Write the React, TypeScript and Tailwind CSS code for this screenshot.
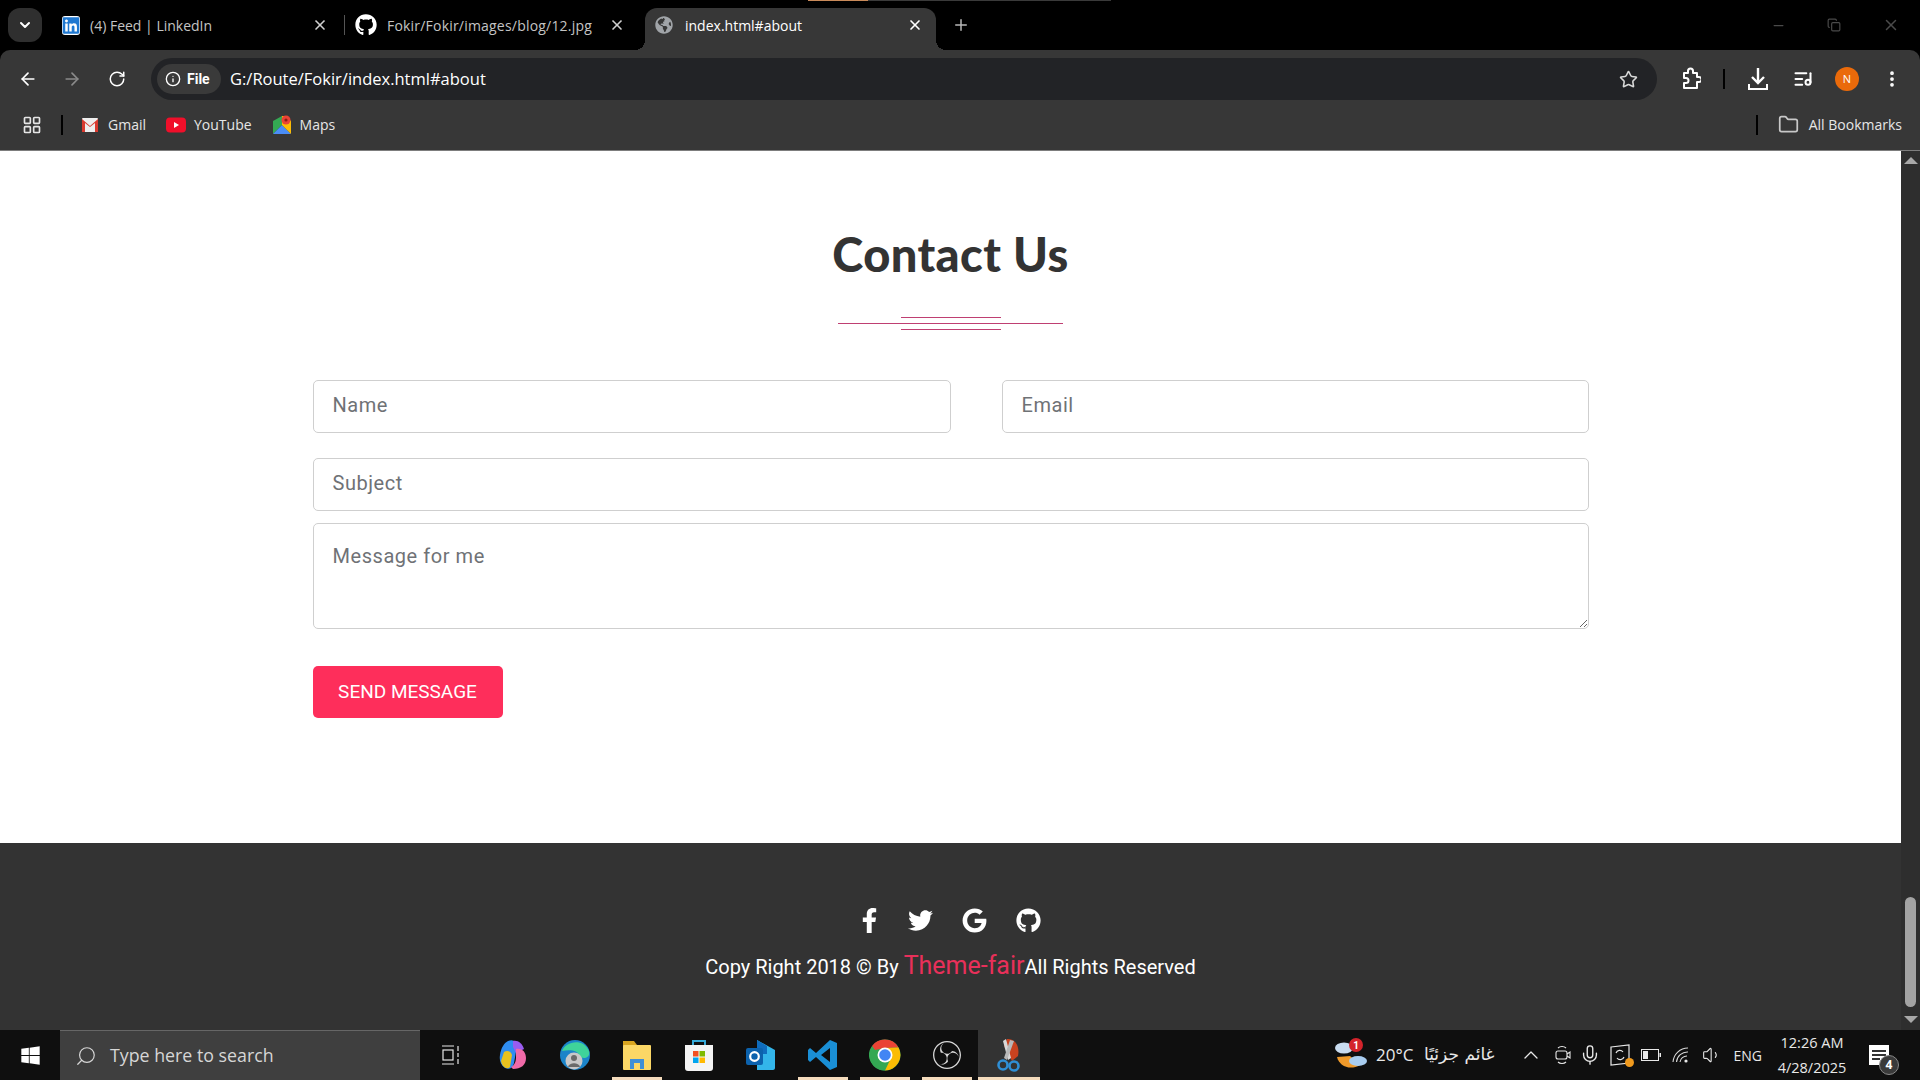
import React from 'react';
import {
  ArrowLeft,
  ArrowRight,
  ChevronDown,
  ChevronUp,
  Copy,
  Folder,
  Info,
  LayoutGrid,
  ListMusic,
  Mic,
  Minus,
  MoreVertical,
  Plus,
  RotateCw,
  Search,
  Star,
  Volume1,
  X,
} from 'lucide-react';
import { FaFacebookF, FaGithub, FaGoogle, FaLinkedin, FaTwitter, FaWindows, FaGlobeAmericas } from 'react-icons/fa';
import { SiObsstudio } from 'react-icons/si';

const GmailIcon = () => (
  <svg viewBox="0 0 18 16" className="w-[18px] h-[16px]">
    <rect x="1" y="1" width="16" height="14" rx="1" fill="#eee" />
    <path d="M1 2 L9 9 L17 2 V15 H14 V6 L9 10 L4 6 V15 H1 Z" fill="#d93a2f" />
  </svg>
);

const YoutubeIcon = () => (
  <svg viewBox="0 0 20 16" className="w-[20px] h-[16px]">
    <rect width="20" height="15" y="0.5" rx="4" fill="#f00f2a" />
    <path d="M8 5 L13 8 L8 11 Z" fill="#fff" />
  </svg>
);

const MapsIcon = () => (
  <svg viewBox="0 0 18 20" className="w-[18px] h-[20px]">
    <path d="M0 6 L9 1 V10 L0 19 Z" fill="#34a853" />
    <path d="M9 10 L18 19 H0 Z" fill="#4a8df6" />
    <path d="M9 1 L13 1 L18 6 V19 L9 10 Z" fill="#fbbc04" />
    <circle cx="13" cy="5" r="4.5" fill="#ea4335" />
    <circle cx="13" cy="5" r="1.6" fill="#8f1d14" />
  </svg>
);

const ExtensionIcon = () => (
  <svg viewBox="0 0 20 24" className="w-[20px] h-[24px]" fill="none" stroke="#fff" strokeWidth="2" strokeLinejoin="round">
    <path d="M3 6 H7 V4 A2.5 2.5 0 0 1 12 4 V6 H16 V10 H18 A2.5 2.5 0 0 1 18 15 H16 V21 H3 V16 H5 A2.5 2.5 0 0 0 5 11 H3 Z" />
  </svg>
);

const TrayDownloadIcon = () => (
  <svg viewBox="0 0 22 24" className="w-[22px] h-[24px]" fill="none" stroke="#fff" strokeWidth="2.4">
    <path d="M11 1 V15 M5 10 L11 16 L17 10" />
    <path d="M2 17 V22 H20 V17" strokeWidth="2" />
  </svg>
);

const CopilotIcon = () => (
  <svg viewBox="0 0 28 32" className="w-[28px] h-[32px]">
    <path d="M9 2 C14 0 17 2 18 7 L15 24 C14 29 10 31 6 29 C2 26 0 22 1 16 C2 9 5 4 9 2 Z" fill="#2f8df0" />
    <path d="M5 13 C8 11 12 12 13 16 L11 28 C8 31 3 28 2 22 Z" fill="#e8c21f" />
    <path d="M14 2 C19 1 23 4 25 10 L17 14 L14 8 Z" fill="#9a5cf0" />
    <path d="M17 10 C23 9 27 13 27 19 C27 26 22 30 14 30 L12 28 C16 26 17 22 17 18 Z" fill="#f06aa8" />
  </svg>
);

const EdgeIcon = () => (
  <svg viewBox="0 0 32 32" className="w-[32px] h-[32px]">
    <circle cx="16" cy="16" r="15" fill="#1b84c9" />
    <path d="M3 12 C6 3 24 -2 30 12 C32 20 22 21 20 16 C19 12 12 10 3 12 Z" fill="#3fd39a" />
    <circle cx="15" cy="22" r="8.5" fill="#c8c8c8" />
    <circle cx="15" cy="19" r="3" fill="#6a6a6a" />
    <path d="M9 28 C10 23 20 23 21 28 Z" fill="#6a6a6a" />
  </svg>
);

const ExplorerIcon = () => (
  <svg viewBox="0 0 30 30" className="w-[30px] h-[30px]">
    <path d="M1 1 H12 L15 5 V10 H1 Z" fill="#d9a520" />
    <rect x="1" y="5" width="28" height="25" rx="1" fill="#fbd766" />
    <path d="M8 29 V19 H22 V29 H18 V23 H12 V29 Z" fill="#3f8fd6" />
  </svg>
);

const StoreIcon = () => (
  <svg viewBox="0 0 30 34" className="w-[30px] h-[34px]">
    <path d="M9 8 V3 H21 V8" stroke="#35a9d8" strokeWidth="2" fill="none" />
    <path d="M1 7 H29 V30 C29 32 28 33 26 33 H4 C2 33 1 32 1 30 Z" fill="#f4f4f4" />
    <rect x="9" y="13" width="5.5" height="5.5" fill="#f25022" />
    <rect x="15.5" y="13" width="5.5" height="5.5" fill="#7fba00" />
    <rect x="9" y="19.5" width="5.5" height="5.5" fill="#00a4ef" />
    <rect x="15.5" y="19.5" width="5.5" height="5.5" fill="#ffb900" />
  </svg>
);

const OutlookIcon = () => (
  <svg viewBox="0 0 32 32" className="w-[32px] h-[32px]">
    <path d="M12 1 L30 11 V29 C30 30 29 31 28 31 H12 Z" fill="#33b5ea" />
    <path d="M12 1 L22 7 V15 H12 Z" fill="#0f6cbd" />
    <rect x="1" y="9" width="17" height="17" rx="2" fill="#0c62ad" />
    <circle cx="9.5" cy="17.5" r="4.3" fill="none" stroke="#fff" strokeWidth="2.2" />
  </svg>
);

const VscodeIcon = () => (
  <svg viewBox="0 0 32 32" className="w-[32px] h-[32px]">
    <path d="M23 1 L30 4 V28 L23 31 L9 18 L3 23 L1 21 V11 L3 9 L9 14 Z M23 9 L14 16 L23 23 Z" fill="#1a8fd6" />
  </svg>
);

const ChromeIcon = () => (
  <svg viewBox="0 0 32 32" className="w-[32px] h-[32px]">
    <circle cx="16" cy="16" r="15.5" fill="#34a853" />
    <path d="M16 .5 A15.5 15.5 0 0 1 29.5 8.5 L16 9 L6 11 L3 7 A15.5 15.5 0 0 1 16 .5 Z" fill="#ea4335" />
    <path d="M3 7 A15.5 15.5 0 0 0 16 31.5 L22 20 L10 20 Z" fill="#34a853" />
    <path d="M29.5 8.5 A15.5 15.5 0 0 1 16 31.5 L22 19 L16 9 Z" fill="#fbbc04" />
    <circle cx="16" cy="16" r="7.5" fill="#fff" />
    <circle cx="16" cy="16" r="5.8" fill="#4285f4" />
  </svg>
);

const SnipIcon = () => (
  <svg viewBox="0 0 30 34" className="w-[30px] h-[34px]">
    <path d="M13 1 C21 0 26 8 24 18 L18 23 L10 8 Z" fill="#c8421f" />
    <path d="M12 1 L17 20 L14 22 L9 3 Z" fill="#d8d8d8" />
    <path d="M20 3 L13 22 L10 20 L16 2 Z" fill="#b8b8b8" />
    <circle cx="9" cy="27" r="4.5" fill="none" stroke="#2f8fd6" strokeWidth="2.6" />
    <circle cx="20" cy="28" r="4.5" fill="none" stroke="#2f8fd6" strokeWidth="2.6" />
  </svg>
);

const WeatherIcon = () => (
  <svg viewBox="0 0 34 34" className="w-[34px] h-[34px]">
    <ellipse cx="10" cy="10" rx="9" ry="5.5" fill="#c9dcf0" />
    <path d="M3 19 C5 28 16 33 26 27 L16 18 Z" fill="#f09a2a" />
    <ellipse cx="24" cy="23" rx="9" ry="5" fill="#a9cdf0" />
    <circle cx="22" cy="7" r="7" fill="#d4232b" />
    <text x="22" y="11" textAnchor="middle" fontSize="10" fontWeight="700" fill="#fff" fontFamily="Roboto, sans-serif">1</text>
  </svg>
);

const MeetIcon = () => (
  <svg viewBox="0 0 16 20" className="w-[16px] h-[20px]" fill="none" stroke="#e8e8e8" strokeWidth="1.1">
    <path d="M3 3 C5 1 9 1 11 3 M3 17 C5 19 9 19 11 17" />
    <rect x="1" y="6" width="11" height="8" rx="2" />
    <path d="M12 9 L15 7 V13 L12 11" />
  </svg>
);

const BatteryIcon = () => (
  <svg viewBox="0 0 20 12" className="w-[20px] h-[12px]">
    <rect x="0.5" y="0.5" width="17" height="11" fill="none" stroke="#e8e8e8" />
    <rect x="2" y="2" width="5" height="8" fill="#e8e8e8" />
    <rect x="18.5" y="4" width="1.5" height="4" fill="#e8e8e8" />
  </svg>
);

const WifiIcon = () => (
  <svg viewBox="0 0 18 18" className="w-[18px] h-[18px]" fill="none" stroke="#d8d8d8" strokeWidth="1.1">
    <path d="M1 16 A15 15 0 0 1 16 2" />
    <path d="M4.5 16 A11 11 0 0 1 16 6" />
    <path d="M8 16 A7 7 0 0 1 15 10" />
    <circle cx="14" cy="15" r="1.6" fill="#e8e8e8" stroke="none" />
  </svg>
);

const UpdateIcon = () => (
  <div className="relative w-[20px] h-[22px]">
    <svg viewBox="0 0 20 22" className="w-[20px] h-[22px]">
      <path d="M1 3 L19 1 V19 L1 21 Z" fill="none" stroke="#e8e8e8" strokeWidth="1.2" />
      <path d="M6 9 A4 4 0 0 1 13 8 M14 13 A4 4 0 0 1 7 14" fill="none" stroke="#e8e8e8" strokeWidth="1.2" />
    </svg>
    <div className="absolute right-[-4px] bottom-[-1px] w-[9px] h-[9px] rounded-full bg-[#f09a1e]" />
  </div>
);

const TaskbarApp = ({ children, open, active }: { children: React.ReactNode; open?: boolean; active?: boolean }) => (
  <div className={`relative w-[62px] h-[50px] flex items-center justify-center shrink-0 ${active ? 'bg-[#333333]' : ''}`}>
    {children}
    {open && <div className={`absolute bottom-0 h-[3px] bg-[#f5dcbd] ${active ? 'left-0 right-0' : 'left-[6px] right-[6px]'}`} />}
  </div>
);

const inputClass =
  "w-full border border-[#cfcfcf] rounded-[5px] bg-white px-[19px] text-[20px] tracking-[0.55px] text-[#495057] placeholder:text-[#6f7276] outline-none";

export default function App() {
  return (
    <div className="relative w-[1920px] h-[1080px] overflow-hidden flex flex-col bg-black font-['Roboto',sans-serif]">
      {/* tab strip */}
      <div className="h-[50px] shrink-0 bg-black flex font-['Open_Sans',sans-serif] text-[14px]">
        <div className="ml-[8px] mt-[8px] w-[34px] h-[34px] rounded-[12px] bg-[#2f2f2f] flex items-center justify-center text-white">
          <ChevronDown size={16} strokeWidth={3} />
        </div>
        <div className="w-[282px] ml-[20px] h-[50px] flex items-center text-[#c4c4c4]">
          <FaLinkedin size={20} className="text-[#1f78d1] bg-white rounded-[3px] w-[18px] h-[19px]" />
          <span className="ml-[10px]">(4) Feed | LinkedIn</span>
          <X size={16} strokeWidth={2.5} className="ml-auto mr-[16px] text-[#d0d0d0]" />
        </div>
        <div className="mt-[15px] w-px h-[20px] bg-[#555555]" />
        <div className="w-[300px] h-[50px] flex items-center text-[#c4c4c4]">
          <FaGithub size={22} className="ml-[10px] text-white" />
          <span className="ml-[10px] w-[206px] overflow-hidden whitespace-nowrap tracking-[0.2px]">Fokir/Fokir/images/blog/12.jpg</span>
          <X size={16} strokeWidth={2.5} className="ml-auto mr-[20px] text-[#d0d0d0]" />
        </div>
        <div className="relative w-[291px] h-[42px] mt-[8px] pb-[8px] rounded-t-[12px] bg-[#373737] flex items-center text-white">
          <div className="absolute left-[-10px] bottom-0 w-[10px] h-[10px] bg-[radial-gradient(circle_at_0_0,transparent_10px,#373737_10px)]" />
          <div className="absolute right-[-10px] bottom-0 w-[10px] h-[10px] bg-[radial-gradient(circle_at_100%_0,transparent_10px,#373737_10px)]" />
          <FaGlobeAmericas size={18} className="ml-[10px] text-[#a0a4a8]" />
          <span className="ml-[12px]">index.html#about</span>
          <X size={16} strokeWidth={2.5} className="ml-auto mr-[13px]" />
        </div>
        <Plus size={18} className="ml-[16px] mt-[16px] text-[#b8b8b8]" />
        <div className="ml-auto flex h-[50px] items-center text-[#4a4a4a]">
          <Minus size={15} />
          <Copy size={14} className="ml-[41px]" />
          <X size={18} className="ml-[41px] mr-[20px]" />
        </div>
      </div>
      <div className="absolute left-[808px] top-0 h-px w-[60px] bg-[#c98a5a]" />
      <div className="absolute left-[868px] top-0 h-px w-[243px] bg-[#3a3a3a]" />

      {/* toolbar */}
      <div className="h-[50px] shrink-0 bg-[#373737] rounded-t-[10px] flex items-end text-white font-['Open_Sans',sans-serif]">
        <div className="h-[50px] pt-[8px] flex items-center">
          <ArrowLeft size={20} className="ml-[18px]" />
          <ArrowRight size={20} className="ml-[24px] text-[#8a8a8a]" />
          <RotateCw size={18} className="ml-[26px]" />
        </div>
        <div className="ml-[25px] w-[1506px] h-[42px] rounded-full bg-[#222326] flex items-center">
          <div className="ml-[6px] w-[64px] h-[30px] rounded-full bg-[#3a3a3a] flex items-center">
            <Info size={16} className="ml-[8px]" />
            <span className="ml-[6px] text-[14px] font-bold font-['Roboto',sans-serif]">File</span>
          </div>
          <span className="ml-[9px] text-[16.5px]">G:/Route/Fokir/index.html#about</span>
          <Star size={19} className="ml-auto mr-[19px] text-[#d8d8d8]" />
        </div>
        <div className="flex-1 h-[50px] pt-[8px] flex items-center">
          <div className="ml-[24px]"><ExtensionIcon /></div>
          <div className="ml-[22px] w-[2px] h-[20px] bg-black" />
          <div className="ml-[22px]"><TrayDownloadIcon /></div>
          <ListMusic size={20} strokeWidth={2.4} className="ml-[24px]" />
          <div className="ml-[22px] w-[24px] h-[24px] rounded-full bg-[#ea6a0a] flex items-center justify-center text-[11px]">N</div>
          <MoreVertical size={20} strokeWidth={2.5} className="ml-[23px]" />
        </div>
      </div>

      {/* bookmarks */}
      <div className="h-[51px] shrink-0 pb-[1px] bg-[#373737] border-b border-[#7d7d7d] flex items-center text-[14px] text-[#e6e6e6] font-['Open_Sans',sans-serif]">
        <LayoutGrid size={20} className="ml-[22px]" />
        <div className="ml-[19px] w-[2px] h-[20px] bg-black" />
        <div className="ml-[18px]"><GmailIcon /></div>
        <span className="ml-[9px]">Gmail</span>
        <div className="ml-[20px]"><YoutubeIcon /></div>
        <span className="ml-[8px]">YouTube</span>
        <div className="ml-[21px]"><MapsIcon /></div>
        <span className="ml-[9px]">Maps</span>
        <div className="ml-auto w-[2px] h-[20px] bg-black" />
        <Folder size={21} className="ml-[20px] text-[#c8c8c8]" />
        <span className="ml-[10px] mr-[18px]">All Bookmarks</span>
      </div>

      {/* page */}
      <div className="flex-1 flex min-h-0">
        <div className="flex-1 flex flex-col min-w-0">
          <div className="h-[692px] shrink-0 bg-white flex flex-col items-center pt-[73px]">
            <h2 className="text-[47px] leading-[60px] font-black tracking-[0.4px] text-[#333333] font-['Lato',sans-serif]">Contact Us</h2>
            <div className="mt-[33px] flex flex-col items-center gap-[5px]">
              <div className="w-[100px] h-px bg-[#bf3f72]" />
              <div className="w-[225px] h-px bg-[#bf3f72]" />
              <div className="w-[100px] h-px bg-[#bf3f72]" />
            </div>
            <form className="mt-[50px] w-[1276px] flex flex-col">
              <div className="grid grid-cols-[638px_587px] gap-x-[51px]">
                <input placeholder="Name" className={`${inputClass} h-[53px] pb-[3px]`} />
                <input placeholder="Email" className={`${inputClass} h-[53px] pb-[3px]`} />
              </div>
              <input placeholder="Subject" className={`${inputClass} h-[53px] mt-[25px] pb-[4px]`} />
              <textarea placeholder="Message for me" className={`${inputClass} h-[106px] mt-[12px] pt-[17px] block`} />
              <button type="button" className="mt-[37px] w-[190px] h-[52px] rounded-[5px] bg-[#fe2e5b] text-white text-[19px]">
                SEND MESSAGE
              </button>
            </form>
          </div>
          <div className="flex-1 bg-[#333333] flex flex-col items-center text-white">
            <div className="mt-[65px] pr-[4px] flex items-center text-[25px]">
              <FaFacebookF />
              <FaTwitter className="ml-[26px]" />
              <FaGoogle className="ml-[29px]" />
              <FaGithub className="ml-[29px]" />
            </div>
            <p className="mt-[17px] text-[20px] leading-[32px] whitespace-nowrap">
              Copy Right 2018 © By <span className="text-[25px] text-[#e8305a]">Theme-fair</span>All Rights Reserved
            </p>
          </div>
        </div>
        {/* scrollbar */}
        <div className="w-[19px] shrink-0 bg-[#2e2e2e] flex flex-col items-center justify-between text-[#a8a8a8]">
          <div className="mt-[6px] w-0 h-0 border-x-[7px] border-x-transparent border-b-[7px] border-b-[#a8a8a8]" />
          <div className="flex flex-col items-center">
            <div className="w-[11px] h-[110px] rounded-full bg-[#a3a3a3]" />
            <div className="mt-[9px] mb-[7px] w-0 h-0 border-x-[7px] border-x-transparent border-t-[7px] border-t-[#a8a8a8]" />
          </div>
        </div>
      </div>

      {/* taskbar */}
      <div className="h-[50px] shrink-0 bg-[#0f0f0f] flex items-center text-white">
        <div className="w-[60px] flex justify-center">
          <FaWindows size={21} />
        </div>
        <div className="w-[360px] h-[50px] bg-[#3f3f3f] border-t border-[#666666] flex items-center text-[#d6d6d6]">
          <Search size={22} strokeWidth={1.3} className="ml-[15px] -scale-x-100" />
          <span className="ml-[13px] text-[17.8px] font-['Open_Sans',sans-serif]">Type here to search</span>
        </div>
        <TaskbarApp>
          <svg viewBox="0 0 20 20" className="w-[20px] h-[20px]" fill="none" stroke="#e8e8e8" strokeWidth="1.2">
            <path d="M1 1 H13 M1 19 H13 M17 1 V6 M17 8 V12 M17 14 V19" />
            <rect x="2" y="5" width="10" height="10" />
          </svg>
        </TaskbarApp>
        <TaskbarApp><CopilotIcon /></TaskbarApp>
        <TaskbarApp><EdgeIcon /></TaskbarApp>
        <TaskbarApp open><ExplorerIcon /></TaskbarApp>
        <TaskbarApp><StoreIcon /></TaskbarApp>
        <TaskbarApp><OutlookIcon /></TaskbarApp>
        <TaskbarApp open><VscodeIcon /></TaskbarApp>
        <TaskbarApp open><ChromeIcon /></TaskbarApp>
        <TaskbarApp open><SiObsstudio size={28} className="text-[#d8d8d8]" /></TaskbarApp>
        <TaskbarApp open active><SnipIcon /></TaskbarApp>

        <div className="ml-auto flex items-center h-[50px] text-[#e8e8e8] font-['Open_Sans',sans-serif]">
          <WeatherIcon />
          <span className="ml-[8px] text-[17px]">20°C</span>
          <span className="ml-[9px] w-[72px] text-[17px] whitespace-nowrap font-['DejaVu_Sans',sans-serif]" dir="rtl">غائم جزئيًا</span>
          <ChevronUp size={24} strokeWidth={1.3} className="ml-[24px]" />
          <div className="ml-[12px]"><MeetIcon /></div>
          <Mic size={22} strokeWidth={1.5} className="ml-[8px]" />
          <div className="ml-[9px]"><UpdateIcon /></div>
          <div className="ml-[11px]"><BatteryIcon /></div>
          <div className="ml-[11px]"><WifiIcon /></div>
          <Volume1 size={20} strokeWidth={1.3} className="ml-[12px]" />
          <span className="ml-[12px] text-[14px]">ENG</span>
          <div className="ml-[17px] w-[66px] flex flex-col items-center text-[14.5px] leading-[25px]">
            <span>12:26 AM</span>
            <span>4/28/2025</span>
          </div>
          <div className="relative ml-[24px] mr-[31px] w-[20px] h-[20px] bg-white flex flex-col justify-center gap-[2px] px-[3px]">
            <div className="h-[2px] bg-[#333333]" />
            <div className="h-[2px] bg-[#333333]" />
            <div className="h-[2px] w-[8px] bg-[#333333]" />
            <div className="absolute right-[-10px] bottom-[-10px] w-[20px] h-[20px] rounded-full bg-[#3a3a3a] border border-[#888888] flex items-center justify-center text-[12px] font-bold text-white">4</div>
          </div>
        </div>
      </div>
    </div>
  );
}
